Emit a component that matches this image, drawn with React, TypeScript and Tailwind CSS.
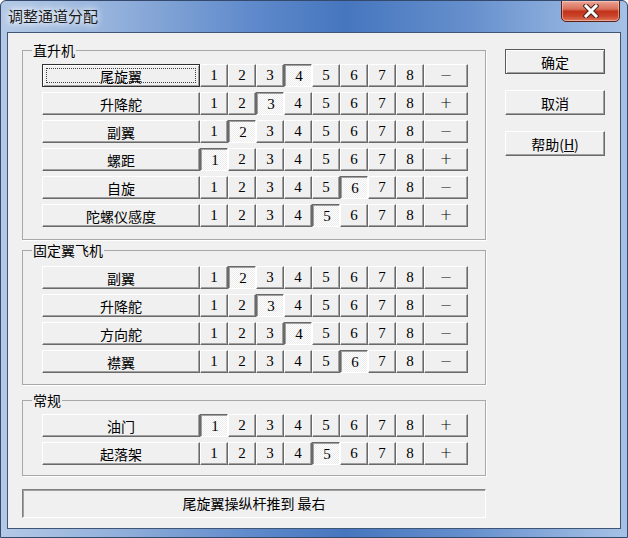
import clsx from "clsx"

type Row = { name: string; ch: number; sign: string; focus?: boolean }

const heliRows: Row[] = [
  { name: "尾旋翼", ch: 4, sign: "−", focus: true },
  { name: "升降舵", ch: 3, sign: "+" },
  { name: "副翼", ch: 2, sign: "−" },
  { name: "螺距", ch: 1, sign: "+" },
  { name: "自旋", ch: 6, sign: "−" },
  { name: "陀螺仪感度", ch: 5, sign: "+" },
]

const planeRows: Row[] = [
  { name: "副翼", ch: 2, sign: "−" },
  { name: "升降舵", ch: 3, sign: "−" },
  { name: "方向舵", ch: 4, sign: "−" },
  { name: "襟翼", ch: 6, sign: "−" },
]

const commonRows: Row[] = [
  { name: "油门", ch: 1, sign: "+" },
  { name: "起落架", ch: 5, sign: "+" },
]

const raised =
  "border border-t-white border-l-white border-r-[#696969] border-b-[#696969] shadow-[inset_-1px_-1px_0_#a0a0a0] bg-[#f0f0f0]"
const sunken =
  "border border-t-[#696969] border-l-[#696969] border-r-white border-b-white shadow-[inset_1px_1px_0_#a0a0a0] bg-[image:repeating-conic-gradient(#ffffff_0_25%,#ececec_0_50%)] bg-[length:2px_2px] pl-[2px] pt-[2px]"

function Btn({ pressed, className, children }: { pressed?: boolean; className?: string; children: React.ReactNode }) {
  return (
    <button type="button" className={clsx("flex items-center justify-center h-[23px] text-[14px] leading-none text-black", pressed ? sunken : raised, className)}>
      {children}
    </button>
  )
}

function ChannelRow({ row }: { row: Row }) {
  return (
    <div className="flex">
      {row.focus ? (
        <button
          type="button"
          className="flex h-[23px] w-[158px] p-[3px] border border-[#303030] shadow-[inset_1px_1px_0_#fff,inset_-1px_-1px_0_#a0a0a0] bg-[#f0f0f0] text-[14px] leading-none"
        >
          <span className="flex-1 flex items-center justify-center border border-dotted border-[#404040]">{row.name}</span>
        </button>
      ) : (
        <Btn className="w-[158px]">{row.name}</Btn>
      )}
      {[1, 2, 3, 4, 5, 6, 7, 8].map((n) => (
        <Btn key={n} pressed={n === row.ch} className="w-[28px] font-['Liberation_Serif',serif] text-[15px] text-[#111]">
          {n}
        </Btn>
      ))}
      <Btn className="w-[44px] font-['DejaVu_Sans',sans-serif] text-[15px] font-light">{row.sign}</Btn>
    </div>
  )
}

function Group({ title, rows, className, pb, pt }: { title: string; rows: Row[]; className?: string; pb: string; pt: string }) {
  return (
    <fieldset className={clsx("w-[464px] border border-[#a8a8a8] shadow-[1px_1px_0_#fff] pl-[19px]", pb, className)}>
      <legend className="-ml-[10px] px-[1px] text-[14px] leading-[16px] h-[16px]">{title}</legend>
      <div className={clsx("flex flex-col gap-[5px]", pt)}>
        {rows.map((r) => (
          <ChannelRow key={r.name} row={r} />
        ))}
      </div>
    </fieldset>
  )
}

function SideButton({ children, isDefault }: { children: React.ReactNode; isDefault?: boolean }) {
  return (
    <button
      type="button"
      className={clsx(
        "h-[25px] w-[100px] text-[14px] leading-none bg-[#f0f0f0] flex items-center justify-center",
        isDefault
          ? "border border-[#5a5a5a] shadow-[inset_1px_1px_0_#fff,inset_-1px_-1px_0_#a0a0a0]"
          : "border border-t-white border-l-white border-r-[#696969] border-b-[#696969] shadow-[inset_-1px_-1px_0_#a0a0a0]"
      )}
    >
      {children}
    </button>
  )
}

export default function App() {
  return (
    <div className="relative w-[628px] h-[538px] overflow-hidden rounded-t-[6px] border border-[#34496b] bg-[linear-gradient(90deg,#b4c9e6_0%,#93b1db_18%,#5f8acb_40%,#4676be_55%,#6690cd_75%,#93b3df_92%,#a6c1e5_100%)] font-['Noto_Sans_CJK_SC',sans-serif] text-black flex flex-col">
      <div className="h-[31px] flex items-center pl-[7px] pb-[1px]">
        <span className="text-[15px] text-[#1a1a1a] [text-shadow:0_0_6px_#ffffff,0_0_10px_#ffffff]">调整通道分配</span>
      </div>
      <div className="absolute left-[560px] top-[-1px] w-[59px] h-[22px] rounded-b-[5px] border border-[#5b2018] bg-[linear-gradient(180deg,#eba596_0%,#d8705a_40%,#c3321a_52%,#c9432a_75%,#dd765b_100%)] shadow-[inset_0_0_0_1px_rgba(255,220,210,0.5)] flex items-center justify-center">
        <svg width="16" height="14" viewBox="0 0 16 14">
          <path d="M3 2 L13 12 M13 2 L3 12" stroke="#4a2420" strokeWidth="5" strokeLinecap="square" />
          <path d="M3 2 L13 12 M13 2 L3 12" stroke="#ffffff" strokeWidth="3" strokeLinecap="square" />
        </svg>
      </div>
      <div className="mx-[6px] h-[497px] border border-[#3e5576] bg-[#f0f0f0] flex pl-[14px] pt-[9px]">
        <div className="flex flex-col w-[464px]">
          <Group title="直升机" rows={heliRows} pt="pt-[6px]" pb="pb-[12px]" />
          <Group title="固定翼飞机" rows={planeRows} pt="pt-[8px]" pb="pb-[11px]" className="mt-[2px]" />
          <Group title="常规" rows={commonRows} pt="pt-[6px]" pb="pb-[10px]" className="mt-[7px]" />
          <div className="mt-[13px] h-[29px] w-[464px] flex items-center justify-center text-[14px] border border-t-[#808080] border-l-[#808080] border-r-white border-b-white shadow-[inset_1px_1px_0_#a0a0a0]">
            尾旋翼操纵杆推到 最右
          </div>
        </div>
        <div className="ml-[19px] mt-[7px] flex flex-col gap-[16px]">
          <SideButton isDefault>确定</SideButton>
          <SideButton>取消</SideButton>
          <SideButton>
            <span>
              帮助(<span className="underline">H</span>)
            </span>
          </SideButton>
        </div>
      </div>
    </div>
  )
}
